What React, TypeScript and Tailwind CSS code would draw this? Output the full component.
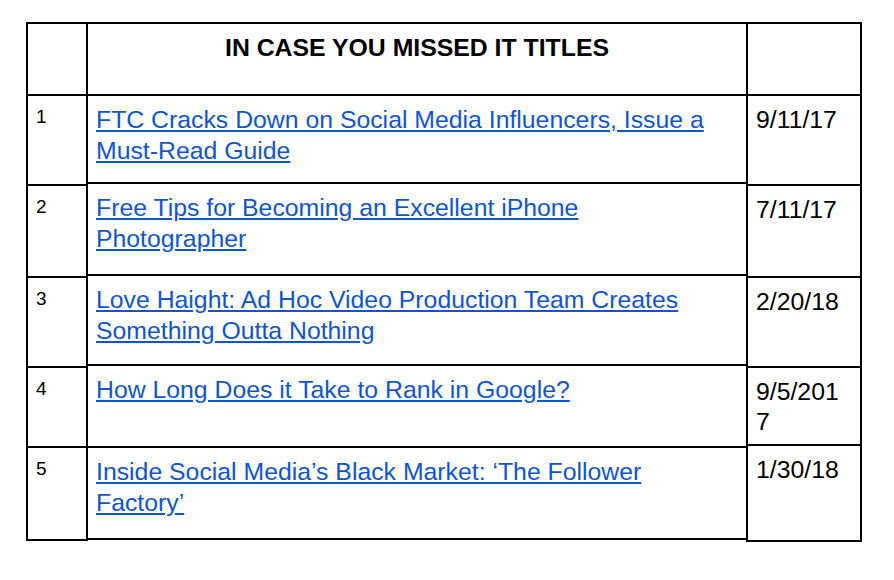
const font = { fontFamily: '"Liberation Sans", Arial, sans-serif' };

const numbers = [
  { n: "", h: "h-[72px]" },
  { n: "1", h: "h-[90px]" },
  { n: "2", h: "h-[92px]" },
  { n: "3", h: "h-[90px]" },
  { n: "4", h: "h-[80px]" },
  { n: "5", h: "h-[93px]" },
];

const titles = [
  { t: "FTC Cracks Down on Social Media Influencers, Issue a Must-Read Guide", h: "h-[88px]" },
  { t: "Free Tips for Becoming an Excellent iPhone Photographer", h: "h-[92px]" },
  { t: "Love Haight: Ad Hoc Video Production Team Creates Something Outta Nothing", h: "h-[90px]" },
  { t: "How Long Does it Take to Rank in Google?", h: "h-[82px]" },
  { t: "Inside Social Media\u2019s Black Market: \u2018The Follower Factory\u2019", h: "h-[92px]" },
];

const dates = [
  { d: "", h: "h-[72px]" },
  { d: "9/11/17", h: "h-[90px]" },
  { d: "7/11/17", h: "h-[92px]" },
  { d: "2/20/18", h: "h-[90px]" },
  { d: "9/5/2017", h: "h-[78px]" },
  { d: "1/30/18", h: "h-[96px]" },
];

export default function App() {
  return (
    <div className="min-h-screen bg-white pl-[26px] pt-[22px] text-black" style={font}>
      <div className="flex items-start">
        <div className="w-[62px] border-x-2 border-b-2 border-black">
          {numbers.map((r, i) => (
            <div key={i} className={`${r.h} border-t-2 border-black pl-2 pt-[10px] text-[19px] leading-[21px]`}>
              {r.n}
            </div>
          ))}
        </div>

        <div className="-ml-[2px] w-[662px] border-x-2 border-b-2 border-black">
          <div className="h-[72px] border-t-2 border-black pt-[8px] text-center text-[24.8px] font-bold leading-[31px]">
            IN CASE YOU MISSED IT TITLES
          </div>
          {titles.map((r, i) => (
            <div key={i} className={`${r.h} border-t-2 border-black pl-2 pr-5 pt-[8px] text-[24.8px] leading-[31px]`}>
              <a href="#" className="text-[#1155cc] underline">
                {r.t}
              </a>
            </div>
          ))}
        </div>

        <div className="-ml-[2px] w-[116px] border-x-2 border-b-2 border-black">
          {dates.map((r, i) => (
            <div key={i} className={`${r.h} border-t-2 border-black pl-2 pr-3 pt-[9px] text-[24.8px] leading-[30px] break-all`}>
              {r.d}
            </div>
          ))}
        </div>
      </div>
    </div>
  );
}
